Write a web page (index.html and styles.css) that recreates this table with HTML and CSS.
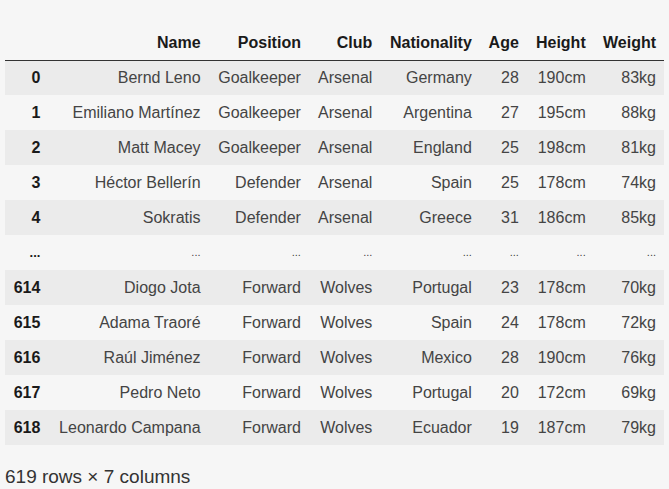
FILE: index.html
```html
<!DOCTYPE html>
<html>
<head>
<meta charset="utf-8">
<link rel="stylesheet" href="styles.css">
</head>
<body>
<div class="output">
<table class="dataframe">
<thead>
<tr><th class="idx"></th><th>Name</th><th>Position</th><th>Club</th><th>Nationality</th><th>Age</th><th>Height</th><th>Weight</th></tr>
</thead>
<tbody>
<tr><th>0</th><td>Bernd Leno</td><td>Goalkeeper</td><td>Arsenal</td><td>Germany</td><td>28</td><td>190cm</td><td>83kg</td></tr>
<tr><th>1</th><td>Emiliano Martínez</td><td>Goalkeeper</td><td>Arsenal</td><td>Argentina</td><td>27</td><td>195cm</td><td>88kg</td></tr>
<tr><th>2</th><td>Matt Macey</td><td>Goalkeeper</td><td>Arsenal</td><td>England</td><td>25</td><td>198cm</td><td>81kg</td></tr>
<tr><th>3</th><td>Héctor Bellerín</td><td>Defender</td><td>Arsenal</td><td>Spain</td><td>25</td><td>178cm</td><td>74kg</td></tr>
<tr><th>4</th><td>Sokratis</td><td>Defender</td><td>Arsenal</td><td>Greece</td><td>31</td><td>186cm</td><td>85kg</td></tr>
<tr class="ellipsis"><th>...</th><td>...</td><td>...</td><td>...</td><td>...</td><td>...</td><td>...</td><td>...</td></tr>
<tr><th>614</th><td>Diogo Jota</td><td>Forward</td><td>Wolves</td><td>Portugal</td><td>23</td><td>178cm</td><td>70kg</td></tr>
<tr><th>615</th><td>Adama Traoré</td><td>Forward</td><td>Wolves</td><td>Spain</td><td>24</td><td>178cm</td><td>72kg</td></tr>
<tr><th>616</th><td>Raúl Jiménez</td><td>Forward</td><td>Wolves</td><td>Mexico</td><td>28</td><td>190cm</td><td>76kg</td></tr>
<tr><th>617</th><td>Pedro Neto</td><td>Forward</td><td>Wolves</td><td>Portugal</td><td>20</td><td>172cm</td><td>69kg</td></tr>
<tr><th>618</th><td>Leonardo Campana</td><td>Forward</td><td>Wolves</td><td>Ecuador</td><td>19</td><td>187cm</td><td>79kg</td></tr>
</tbody>
</table>
<p class="shape">619 rows × 7 columns</p>
</div>
</body>
</html>
```
FILE: styles.css
```css
html, body {
  margin: 0;
  padding: 0;
  background: #f6f6f6;
}
body {
  font-family: "Liberation Sans", Arial, sans-serif;
  font-size: 16px;
  color: #333;
}
.output {
  padding: 25px 5px 0 5px;
}
.dataframe {
  border-collapse: collapse;
  border-spacing: 0;
  width: 659px;
}
.dataframe th,
.dataframe td {
  height: 35px;
  padding: 0 8px;
  text-align: right;
  vertical-align: middle;
  white-space: nowrap;
  box-sizing: border-box;
  line-height: 19px;
}
.dataframe th {
  font-weight: bold;
  color: #1a1a1a;
}
.dataframe thead th {
  border-bottom: 1px solid #333;
}
.dataframe tbody tr:nth-child(odd) {
  background: #ebebeb;
}
.dataframe tbody td {
  color: #444;
}
.ellipsis td {
  color: #b8b8b8;
  font-size: 11px;
}
.ellipsis th {
  font-size: 13px;
}
.shape {
  margin: 21px 0 0 0;
  font-size: 19px;
  line-height: 22px;
  color: #333;
}
```
